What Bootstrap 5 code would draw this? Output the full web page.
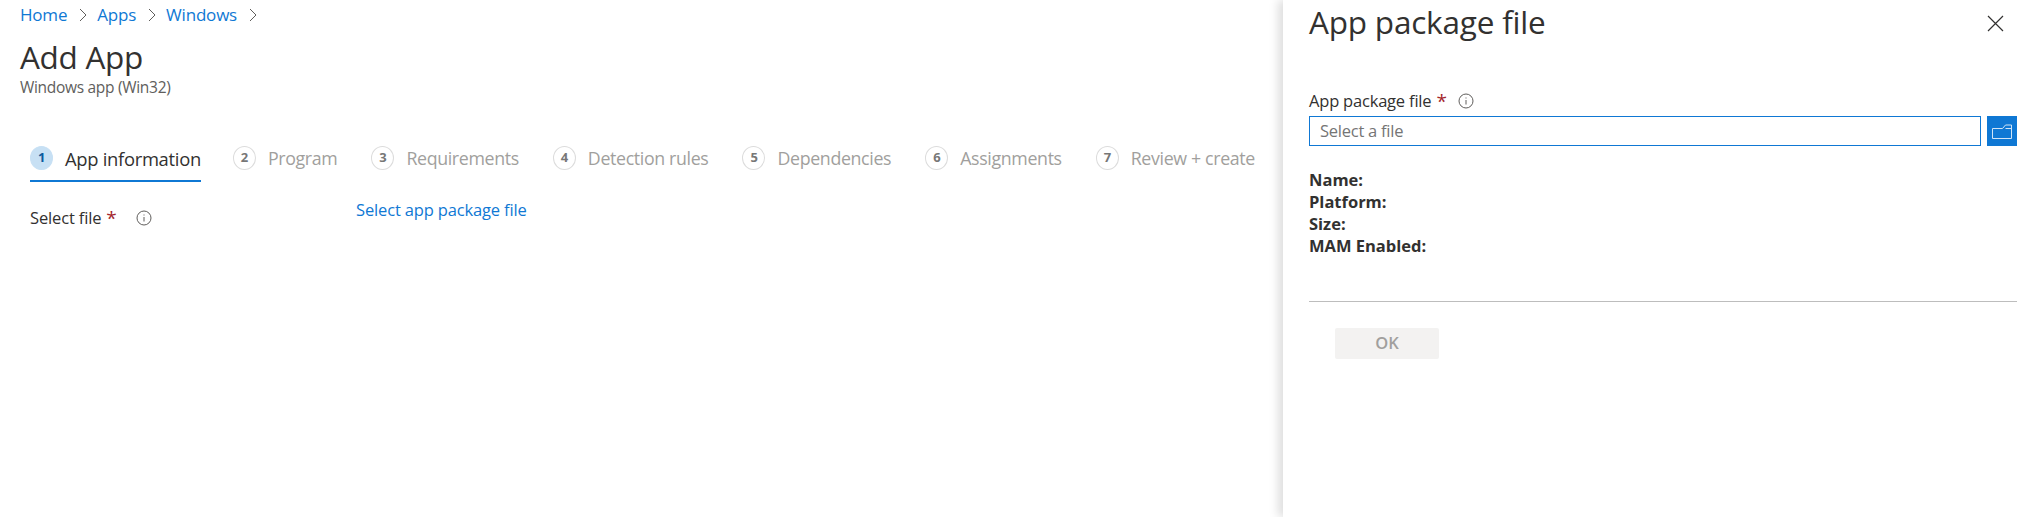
<!DOCTYPE html>
<html lang="en">
<head>
  <meta charset="UTF-8">
  <title>Add App</title>
  <link href="https://cdn.jsdelivr.net/npm/bootstrap@5.3.3/dist/css/bootstrap.min.css" rel="stylesheet">
  <style>
    body {
      margin: 0;
      height: 517px;
      overflow: hidden;
      background: #fff;
      color: #323130;
      font-family: "Open Sans", "Noto Sans", sans-serif;
    }
    a { color: #0f78d4; text-decoration: none; }
    .page-wrap { height: 517px; }
    .main-pane { width: 1283px; padding: 3px 0 0 20px; }
    .side-pane {
      width: 754px;
      padding: 0 20px 0 26px;
      box-shadow: -5px 0 9px rgba(0,0,0,.13);
      z-index: 2;
    }
    .crumbs { font-size: 17px; height: 24px; line-height: 24px; letter-spacing: -.2px; }
    .crumbs svg { margin: 0 10px 0 12px; }
    .page-title { font-size: 31.5px; font-weight: 500; line-height: 40px; margin: 10px 0 0; letter-spacing: -.3px; }
    .page-sub { font-size: 15.5px; line-height: 20px; color: #605e5c; letter-spacing: -.3px; }
    .step-row { margin: 50px 0 0 10px; height: 35px; }
    .step-item { color: #a19f9d; font-size: 17.8px; letter-spacing: -.35px; height: 35px; margin-right: 34px; padding-bottom: 12px; }
    .step-item:last-child { margin-right: 0; }
    .step-item.is-active { color: #323130; border-bottom: 2px solid #0f78d4; padding-bottom: 10px; margin-right: 32px; font-weight: 500; font-size: 18.4px; letter-spacing: -.3px; }
    .step-num {
      width: 23px; height: 24px; border-radius: 50%;
      border: 1px solid #dcdcdc;
      font-size: 13px; font-weight: 700; color: #777;
      margin: 0 12px 2px 0;
    }
    .is-active .step-num { background: #c7e0f4; border-color: #c7e0f4; color: #0b5a9e; }
    .file-row { margin: 16px 0 0 10px; font-size: 16.5px; letter-spacing: -.15px; }
    .file-label { width: 326px; padding-top: 8px; color: #323130; }
    .req-star { color: #a4262c; font-size: 19px; line-height: 1; margin-left: 5px; }
    .info-ico { margin-left: 19px; }
    .panel-head { height: 44px; }
    .panel-title { font-size: 31.5px; font-weight: 500; line-height: 44px; margin: 0; letter-spacing: -.2px; }
    .field-label { font-size: 16.5px; margin: 43px 0 1px; height: 28px; line-height: 24px; letter-spacing: -.2px; }
    .field-label .info-ico { margin-left: 11.5px; }
    .file-input {
      height: 30px; width: 672px;
      border: 1px solid #0f78d4; border-radius: 0;
      padding: 0 10px 2px; font-size: 16.5px; letter-spacing: -.25px; line-height: 26px;
      color: #323130; outline: 0;
    }
    .file-input::placeholder { color: #757575; opacity: 1; }
    .folder-btn { width: 30px; height: 30px; background: #0f78d4; border: 0; padding: 0; margin-left: 6px; }
    .meta-list { margin-top: 23px; font-size: 16.5px; font-weight: 700; line-height: 22px; }
    .panel-rule { margin: 44px 0 0; border: 0; border-top: 1px solid #bdbdbd; opacity: 1; }
    .ok-btn {
      width: 104px; height: 31px; margin: 26px 0 0 26px;
      background: #f3f2f1; color: #a19f9d; border: 0; border-radius: 2px;
      font-size: 16.5px; font-weight: 600; padding: 0;
    }
    .ok-btn:disabled { background: #f3f2f1; color: #a19f9d; opacity: 1; }
    .close-ico { margin: 3px 13px 0 0; }
  </style>
</head>
<body>
<div class="d-flex page-wrap">

  <!-- left side -->
  <div class="main-pane flex-shrink-0">
    <div class="crumbs d-flex align-items-center">
      <a href="#">Home</a>
      <svg width="8" height="14" viewBox="0 0 8 14"><path d="M1 1l6 6-6 6" fill="none" stroke="#605e5c"/></svg>
      <a href="#">Apps</a>
      <svg width="8" height="14" viewBox="0 0 8 14"><path d="M1 1l6 6-6 6" fill="none" stroke="#605e5c"/></svg>
      <a href="#">Windows</a>
      <svg width="8" height="14" viewBox="0 0 8 14"><path d="M1 1l6 6-6 6" fill="none" stroke="#605e5c"/></svg>
    </div>
    <h1 class="page-title">Add App</h1>
    <div class="page-sub">Windows app (Win32)</div>

    <div class="step-row d-flex text-nowrap">
      <div class="step-item is-active d-flex align-items-center flex-shrink-0"><span class="step-num d-flex align-items-center justify-content-center">1</span>App information</div>
      <div class="step-item d-flex align-items-center flex-shrink-0"><span class="step-num d-flex align-items-center justify-content-center">2</span>Program</div>
      <div class="step-item d-flex align-items-center flex-shrink-0"><span class="step-num d-flex align-items-center justify-content-center">3</span>Requirements</div>
      <div class="step-item d-flex align-items-center flex-shrink-0"><span class="step-num d-flex align-items-center justify-content-center">4</span>Detection rules</div>
      <div class="step-item d-flex align-items-center flex-shrink-0"><span class="step-num d-flex align-items-center justify-content-center">5</span>Dependencies</div>
      <div class="step-item d-flex align-items-center flex-shrink-0"><span class="step-num d-flex align-items-center justify-content-center">6</span>Assignments</div>
      <div class="step-item d-flex align-items-center flex-shrink-0"><span class="step-num d-flex align-items-center justify-content-center">7</span>Review + create</div>
    </div>

    <div class="file-row d-flex">
      <div class="file-label d-flex align-items-center">Select file<span class="req-star">*</span>
        <svg class="info-ico" width="16" height="16" viewBox="0 0 16 16"><circle cx="8" cy="8" r="7" fill="none" stroke="#605e5c"/><path d="M8 7v4.5M8 4.5v1" stroke="#605e5c"/></svg>
      </div>
      <a href="#">Select app package file</a>
    </div>
  </div>

  <!-- right panel -->
  <div class="side-pane flex-grow-1">
    <div class="panel-head d-flex justify-content-between align-items-center">
      <h2 class="panel-title">App package file</h2>
      <svg class="close-ico" width="17" height="17" viewBox="0 0 17 17"><path d="M1 1l15 15M16 1L1 16" stroke="#323130" stroke-width="1.2"/></svg>
    </div>
    <div class="field-label d-flex align-items-center">App package file<span class="req-star">*</span>
      <svg class="info-ico" width="16" height="16" viewBox="0 0 16 16"><circle cx="8" cy="8" r="7" fill="none" stroke="#605e5c"/><path d="M8 7v4.5M8 4.5v1" stroke="#605e5c"/></svg>
    </div>
    <div class="d-flex">
      <input class="file-input" type="text" placeholder="Select a file">
      <button class="folder-btn d-flex align-items-center justify-content-center" type="button">
        <svg width="20" height="15" viewBox="0 0 20 15"><path d="M.5 14.500V4.500h10l3-3.500h6v13.500zM13.500 4.500h6" fill="none" stroke="#cfe4f7"/></svg>
      </button>
    </div>
    <div class="meta-list">
      <div>Name:</div>
      <div>Platform:</div>
      <div>Size:</div>
      <div>MAM Enabled:</div>
    </div>
    <hr class="panel-rule">
    <button class="ok-btn" type="button" disabled>OK</button>
  </div>

</div>
<script src="https://cdn.jsdelivr.net/npm/bootstrap@5.3.3/dist/js/bootstrap.bundle.min.js"></script>
</body>
</html>
